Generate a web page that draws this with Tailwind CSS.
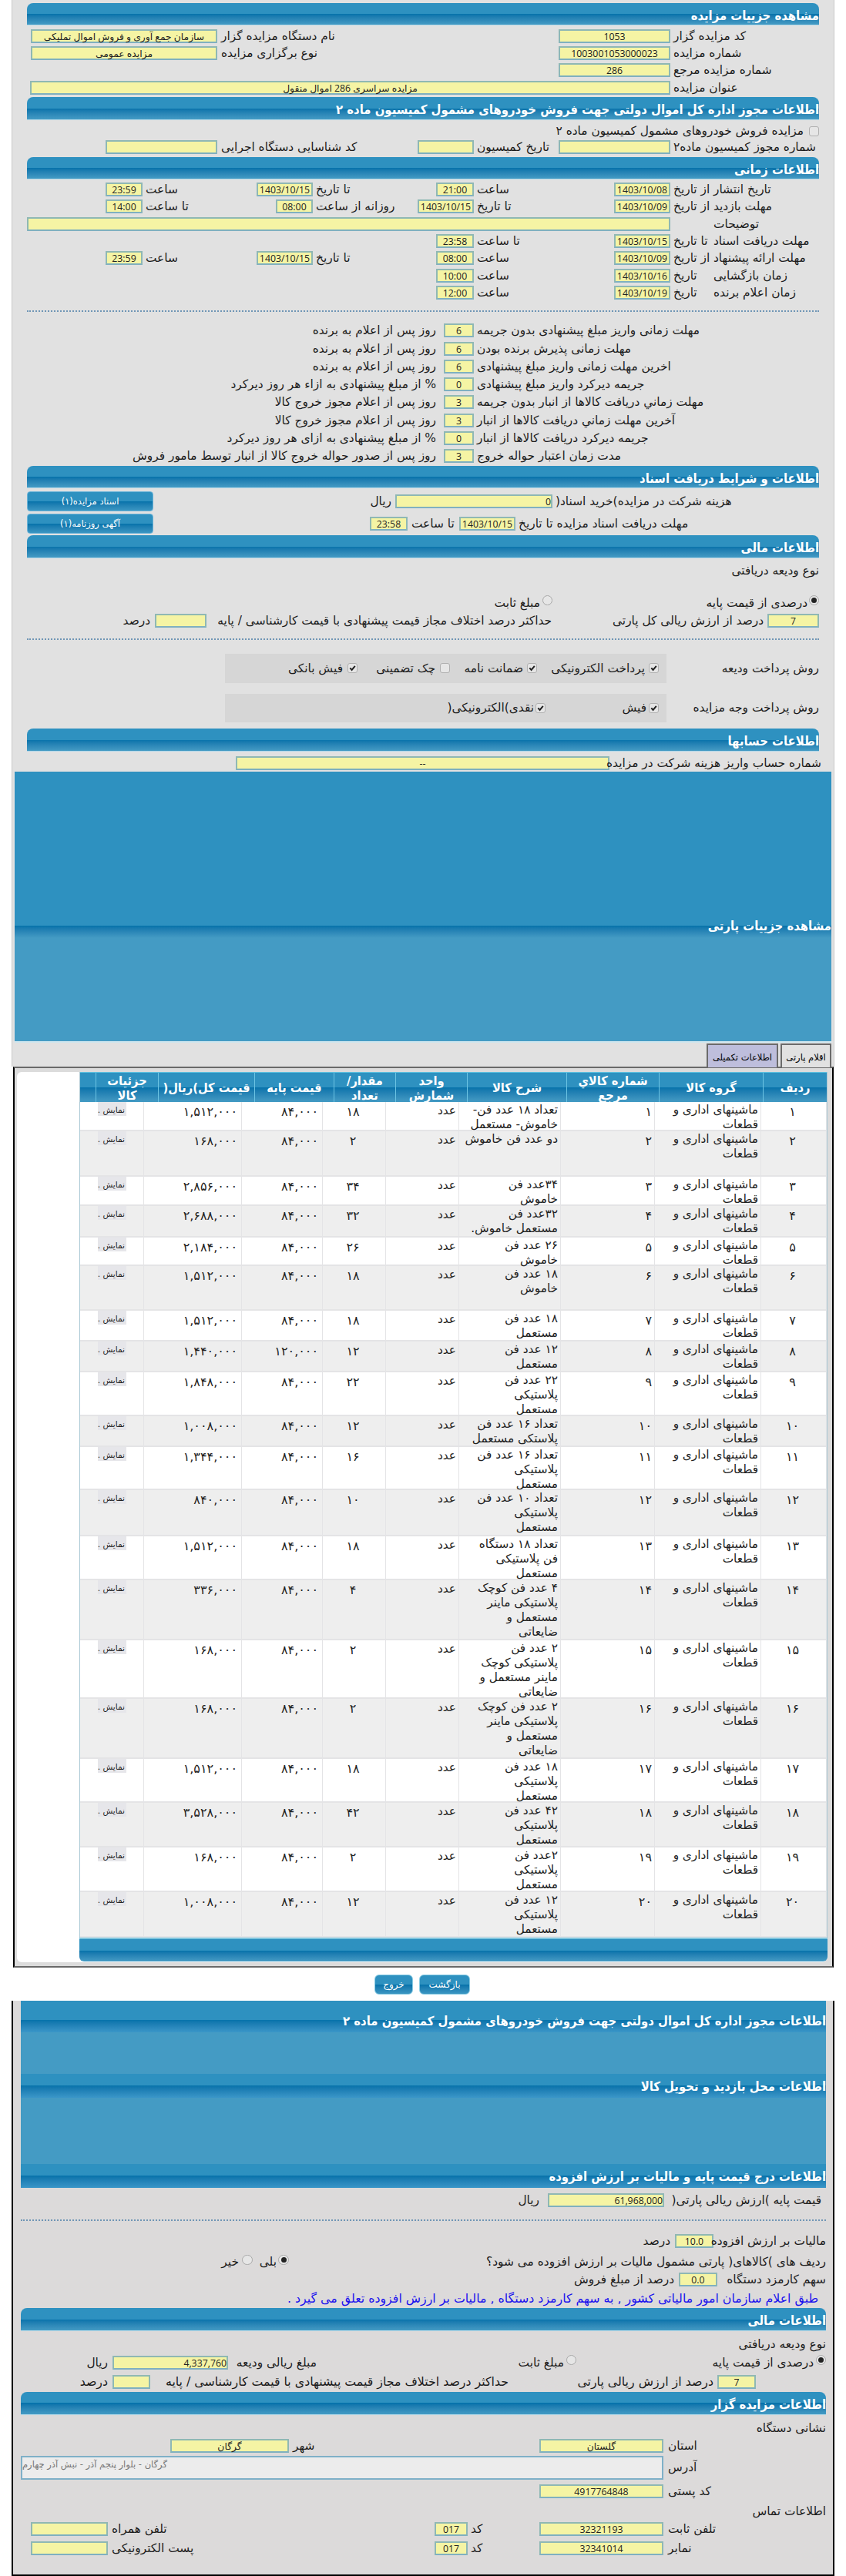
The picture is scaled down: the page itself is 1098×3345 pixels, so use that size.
<!DOCTYPE html>
<html lang="fa">
<head>
  <meta charset="UTF-8">
  <meta name="viewport" content="width=device-width, initial-scale=1.0">
  <title>مشاهده جزییات مزایده</title>
  <script src="https://cdn.jsdelivr.net/npm/@tailwindcss/browser@4"></script>
</head>
<body class="w-[1098px] bg-white text-[#1c1c1c] overflow-x-hidden font-['DejaVu_Sans',sans-serif]">

  <!-- Auction form -->
  <section id="auction" class="mx-[15px] w-[1068px] h-[1002px] bg-[#e1e1e1] border-x border-[#c9c9c9]"></section>

  <!-- Lot heading block -->
  <section class="mx-[15px] w-[1068px] h-[383px] bg-[#e1e1e1] border-x border-[#c9c9c9] px-[3px]">
    <div class="h-[352px] bg-[#449bc4] border-b-2 border-[#cfe6ee] flex flex-col">
      <div class="h-[200px] bg-[#2e91c0]"></div>
      <div dir="rtl" class="h-[16px] bg-linear-to-b from-[#0472aa] to-[#449bc4] relative">
        <span class="absolute right-0 -top-[13px] leading-[28px] text-[16.5px] font-bold font-['DejaVu_Sans_Condensed','DejaVu_Sans',sans-serif] text-white whitespace-nowrap">مشاهده جزییات پارتی</span>
      </div>
    </div>
    <!-- Tabs -->
    <div dir="rtl" class="flex items-end gap-[3px] pt-px text-[11.5px] text-black whitespace-nowrap">
      <div class="w-[66px] h-[31px] leading-[32px] text-center border-2 border-b-0 border-[#6b6b6b] bg-[#e1e1e1]">اقلام پارتی</div>
      <div class="w-[93px] h-[31px] leading-[32px] text-center border-2 border-b-0 border-[#6b6b6b] bg-[#bebedc]">اطلاعات تکمیلی</div>
    </div>
  </section>

  <!-- Lot items -->
  <section class="mx-[17px] w-[1065px] h-[1170px] border-2 border-black border-y-[#6a6a6a] bg-[#dcdcdc] pl-[3px] pr-[7px] py-[5px]">
    <div class="h-[1156px] bg-white rounded-md pl-[81px]">
      <div class="w-[971px] border-x border-[#aac8d4]">
        <div id="itemsHead" class="flex h-[39px] border-t border-[#5cc0e0] bg-linear-to-b from-[#2e91c0] from-50% via-[#0472aa] via-50% to-[#449bc4] text-white font-bold text-[16.3px] leading-[19px] font-['DejaVu_Sans_Condensed','DejaVu_Sans',sans-serif]"></div>
        <div id="items"></div>
      </div>
      <div class="w-[971px] h-[31px] rounded-b-md border-t-2 border-[#7cc4de] bg-linear-to-b from-[#2e91c0] from-52% via-[#0472aa] via-52% to-[#449bc4]"></div>
    </div>
  </section>

  <!-- Actions -->
  <div dir="rtl" class="flex h-[43px] items-center pr-[488px] gap-[8px] text-white text-[12px]">
    <button class="w-[66px] h-[26px] rounded-md border border-[#8acce4] bg-linear-to-b from-[#2e91c0] from-50% via-[#0472aa] via-50% to-[#3a96c2]">بازگشت</button>
    <button class="w-[50px] h-[26px] rounded-md border border-[#8acce4] bg-linear-to-b from-[#2e91c0] from-50% via-[#0472aa] via-50% to-[#3a96c2]">خروج</button>
  </div>

  <!-- Lot details -->
  <section class="mx-[15px] w-[1068px] h-[747px] bg-[#dcdada] border-2 border-t-0 border-black">
    <div class="ml-[10px] w-[1045px] h-[243px] bg-[#449bc4] text-white text-[16.5px] font-bold whitespace-nowrap font-['DejaVu_Sans_Condensed','DejaVu_Sans',sans-serif]">
      <div class="h-[10px] bg-[#2e91c0]"></div>
      <div dir="rtl" class="h-[31px] leading-[33px] bg-linear-to-b from-[#2e91c0] from-48% via-[#0472aa] via-48% to-[#3a96c8]">اطلاعات مجوز اداره کل اموال دولتی جهت فروش خودروهای مشمول کمیسیون ماده ۲</div>
      <div class="h-[54px]"></div>
      <div dir="rtl" class="h-[31px] leading-[33px] bg-linear-to-b from-[#2e91c0] from-48% via-[#0472aa] via-48% to-[#3a96c8]">اطلاعات محل بازدید و تحویل کالا</div>
      <div class="h-[86px]"></div>
      <div dir="rtl" class="h-[31px] leading-[33px] bg-linear-to-b from-[#2e91c0] from-48% via-[#0472aa] via-48% to-[#3a96c8]">اطلاعات درج قیمت پایه و مالیات بر ارزش افزوده</div>
    </div>
    <div id="lot"></div>
  </section>

<script>
  // class names of the row parts
  const kinds = {
    f: "shrink-0 h-[18px] leading-[15px] border-2 border-[#8fb8b4] border-b-[#7fb0c0] bg-[#f5f4a4] text-center text-[12.3px] text-[#222] whitespace-nowrap font-['Open_Sans','DejaVu_Sans',sans-serif]",
    n: "shrink-0 h-[18px] leading-[15px] border-2 border-[#8fb8b4] border-b-[#7fb0c0] bg-[#f5f4a4] text-right text-[12.3px] text-[#222] whitespace-nowrap font-['Open_Sans','DejaVu_Sans',sans-serif]",
    l: "shrink-0 text-left whitespace-nowrap leading-[18px]",
    r: "shrink-0 text-right whitespace-nowrap leading-[18px]",
    b: "shrink-0 h-[26px] leading-[25px] text-center text-[11.5px] text-white rounded-sm border border-[#6cb4d8] bg-linear-to-b from-[#2e91c0] from-50% via-[#0472aa] via-50% to-[#3a96c2]",
    c: "shrink-0 h-[13px] border border-[#b0b0b0] rounded-[3px] bg-[#e6e6e6]",
    k: "shrink-0 h-[13px] border border-[#b0b0b0] rounded-[3px] bg-[#e6e6e6]",
    o: "shrink-0 h-[13px] -mt-[6px] border border-[#a8a8a8] rounded-full bg-[#e6e6e6]",
    p: "shrink-0 h-[13px] -mt-[6px] border border-[#a8a8a8] rounded-full bg-[#e6e6e6] flex items-center justify-center",
    a: "shrink-0 h-[31px] border-2 border-[#7fb0c8] bg-[#ececec] text-left text-[11.5px] text-[#777] leading-[19px]"
  };
  const tick = '<svg viewBox="0 0 11 11" class="w-[11px] h-[11px]"><path d="M2.3 5.4 4.6 8 8.8 2.8" fill="none" stroke="#222" stroke-width="2"/></svg>';
  const dot = '<i class="w-[7px] h-[7px] rounded-full bg-[#222]"></i>';

  // x0, y0: where the panel's content box starts; h row = section title, d row = dotted rule
  function fill(id, x0, y0, left, right, rows) {
    let y = y0, html = "";
    for (const [top, bottom, type, data] of rows) {
      const mt = top - y;
      y = bottom;
      const box = `margin-top:${mt}px;height:${bottom - top}px`;
      const wide = `${box};margin-left:${left - x0}px;width:${right - left}px`;
      if (type === "h") {
        html += `<div dir="rtl" class="rounded-t-lg border-b border-[#b4d8e8] bg-linear-to-b from-[#2e91c0] from-50% via-[#0472aa] via-50% to-[#449bc4] text-white font-bold text-[16.5px] leading-[33px] whitespace-nowrap font-['DejaVu_Sans_Condensed','DejaVu_Sans',sans-serif]" style="${wide}">${data}</div>`;
      } else if (type === "d") {
        html += `<div class="border-t-2 border-dotted border-[#6f95b5]" style="${wide}"></div>`;
      } else {
        let x = x0, cells = "";
        data.forEach((it, i) => {
          const k = it[0];
          let a, b, text = it[it.length - 1];
          if (k === "l") { a = it[1]; b = data[i + 1] ? data[i + 1][1] : right + 6; }
          else if (k === "r") { a = x; b = it[1]; }
          else { a = it[1]; b = it[2]; if (it.length < 4) text = ""; }
          if (k === "k") text = tick;
          if (k === "p") text = dot;
          cells += `<div dir="rtl" class="${kinds[k]}" style="margin-left:${a - x}px;width:${b - a}px">${text}</div>`;
          x = b;
        });
        html += `<div class="flex items-center ${type}" style="${box}">${cells}</div>`;
      }
    }
    document.getElementById(id).innerHTML = `<div class="flow-root">${html}</div>`;
  }

  const T = "text-[15.4px]";
  const after = ["روز پس از اعلام به برنده", "روز پس از اعلام به برنده", "روز پس از اعلام به برنده", "% از مبلغ پیشنهادی به ازاء هر روز دیرکرد", "روز پس از اعلام مجوز خروج کالا", "روز پس از اعلام مجوز خروج کالا", "% از مبلغ پیشنهادی به ازای هر روز دیرکرد", "روز پس از صدور حواله خروج کالا از انبار توسط مامور فروش"];
  const before = ["مهلت زمانی واریز مبلغ پیشنهادی بدون جریمه", "مهلت زمانی پذیرش برنده بودن", "اخرین مهلت زمانی واریز مبلغ پیشنهادی", "جریمه دیرکرد واریز مبلغ پیشنهادی", "مهلت زماني دریافت کالاها از انبار بدون جریمه", "آخرین مهلت زماني دریافت کالاها از انبار", "جریمه دیرکرد دریافت کالاها از انبار", "مدت زمان اعتبار حواله خروج"];
  const days = [6, 6, 6, 0, 3, 3, 0, 3];

  fill("auction", 16, 0, 35, 1063, [
    [4, 33, "h", "مشاهده جزییات مزایده"],
    [35.5, 57.8, T, [["f", 40, 282, "سازمان جمع آوری و فروش اموال تملیکی"], ["l", 287, "نام دستگاه مزایده گزار"], ["f", 725, 870, "1053"], ["l", 874, "کد مزایده گزار"]]],
    [57.8, 80.1, T, [["f", 40, 282, "مزایده عمومی"], ["l", 287, "نوع برگزاری مزایده"], ["f", 725, 870, "1003001053000023"], ["l", 874, "شماره مزایده"]]],
    [80.1, 102.4, T, [["f", 725, 870, "286"], ["l", 874, "شماره مزایده مرجع"]]],
    [102.4, 124.7, T, [["f", 39, 870, "مزایده سراسری 286 اموال منقول"], ["l", 874, "عنوان مزایده"]]],
    [126, 156, "h", "اطلاعات مجوز اداره کل اموال دولتی جهت فروش خودروهای مشمول کمیسیون ماده ۲"],
    [160, 181, T, [["r", 1043, "مزایده فروش خودروهای مشمول کمیسیون ماده ۲"], ["c", 1050, 1063]]],
    [181, 202, T, [["f", 137, 282], ["l", 287, "کد شناسایی دستگاه اجرایی"], ["f", 542, 615], ["l", 619, "تاریخ کمیسیون"], ["f", 725, 870], ["l", 874, "شماره مجوز کمیسیون ماده۲"]]],
    [204, 233, "h", "اطلاعات زمانی"],
    [235, 257.3, T, [["f", 137, 185, "23:59"], ["l", 189, "ساعت"], ["f", 333, 406, "1403/10/15"], ["l", 410, "تا تاریخ"], ["f", 566, 615, "21:00"], ["l", 619, "ساعت"], ["f", 797, 870, "1403/10/08"], ["l", 874, "از تاریخ"], ["l", 926, "تاریخ انتشار"]]],
    [257.3, 279.6, T, [["f", 137, 185, "14:00"], ["l", 189, "تا ساعت"], ["f", 358, 406, "08:00"], ["l", 410, "روزانه از ساعت"], ["f", 542, 615, "1403/10/15"], ["l", 619, "تا تاریخ"], ["f", 797, 870, "1403/10/09"], ["l", 874, "از تاریخ"], ["l", 926, "مهلت بازدید"]]],
    [279.6, 301.9, T, [["f", 35, 870], ["l", 926, "توضیحات"]]],
    [301.9, 324.2, T, [["f", 566, 615, "23:58"], ["l", 619, "تا ساعت"], ["f", 797, 870, "1403/10/15"], ["l", 874, "تا تاریخ"], ["l", 926, "مهلت دریافت اسناد"]]],
    [324.2, 346.5, T, [["f", 137, 185, "23:59"], ["l", 189, "ساعت"], ["f", 333, 406, "1403/10/15"], ["l", 410, "تا تاریخ"], ["f", 566, 615, "08:00"], ["l", 619, "ساعت"], ["f", 797, 870, "1403/10/09"], ["l", 874, "از تاریخ"], ["l", 926, "مهلت ارائه پیشنهاد"]]],
    [346.5, 368.8, T, [["f", 566, 615, "10:00"], ["l", 619, "ساعت"], ["f", 797, 870, "1403/10/16"], ["l", 874, "تاریخ"], ["l", 926, "زمان بازگشایی"]]],
    [368.8, 391.1, T, [["f", 566, 615, "12:00"], ["l", 619, "ساعت"], ["f", 797, 870, "1403/10/19"], ["l", 874, "تاریخ"], ["l", 926, "زمان اعلام برنده"]]],
    [403, 405, "d"],
    ...days.map((n, i) => [417.7 + i * 23.3, 441 + i * 23.3, T, [["r", 566, after[i]], ["f", 576, 615, n], ["l", 619, before[i]]]]),
    [605, 634, "h", "اطلاعات و شرایط دریافت اسناد"],
    [637, 665, T, [["b", 35, 199, "اسناد مزایده(۱)"], ["r", 508, "ریال"], ["n", 513, 717, "0"], ["l", 721, "هزینه شرکت در مزایده)خرید اسناد("]]],
    [666, 694, T, [["b", 35, 199, "آگهی روزنامه(۱)"], ["f", 480, 529, "23:58"], ["l", 534, "تا ساعت"], ["f", 596, 669, "1403/10/15"], ["l", 673, "مهلت دریافت اسناد مزایده تا تاریخ"]]],
    [695, 725, "h", "اطلاعات مالی"],
    [730, 752, T, [["r", 1063, "نوع ودیعه دریافتی"]]],
    [772, 794, T, [["r", 701, "مبلغ ثابت"], ["o", 704, 717], ["r", 1048, "درصدی از قیمت پایه"], ["p", 1050, 1063]]],
    [795, 817, T, [["r", 195, "درصد"], ["f", 201, 268], ["r", 716, "حداکثر درصد اختلاف مجاز قیمت پیشنهادی با قیمت کارشناسی / پایه"], ["r", 991, "درصد از ارزش ریالی کل پارتی"], ["f", 996, 1063, "7"]]],
    [829, 831, "d"],
    [849, 887, T + " bg-linear-[90deg,transparent_276px,#d6d6d6_276px,#d6d6d6_849px,transparent_849px]", [["r", 445, "فیش بانکی"], ["k", 451, 464], ["r", 565, "چک تضمینی"], ["c", 571, 584], ["r", 679, "ضمانت نامه"], ["k", 684, 697], ["r", 837, "پرداخت الکترونیکی"], ["k", 842, 855], ["r", 1063, "روش پرداخت ودیعه"]]],
    [901, 938, T + " bg-linear-[90deg,transparent_276px,#d6d6d6_276px,#d6d6d6_849px,transparent_849px]", [["r", 693, "نقدی)الکترونیکی("], ["k", 695, 708], ["r", 839, "فیش"], ["k", 842, 855], ["r", 1063, "روش پرداخت وجه مزایده"]]],
    [946, 976, "h", "اطلاعات حسابها"],
    [981, 1001, T, [["f", 306, 791, "--"], ["r", 1066, "شماره حساب واریز هزینه شرکت در مزایده"]]]
  ]);

  fill("lot", 17, 2841, 27, 1072, [
    [2846, 2868, T, [["r", 700, "ریال"], ["n", 711, 862, "61,968,000"], ["r", 1066, "قیمت پایه )ارزش ریالی پارتی("]]],
    [2882, 2884, "d"],
    [2899, 2920, T, [["r", 870, "درصد"], ["f", 876, 926, "10.0"], ["r", 1072, "مالیات بر ارزش افزوده"]]],
    [2926, 2948, T, [["r", 310, "خیر"], ["o", 314, 328], ["r", 359, "بلی"], ["p", 361, 375], ["r", 1072, "ردیف های )کالاهای( پارتی مشمول مالیات بر ارزش افزوده می شود؟"]]],
    [2949, 2970, T, [["r", 875, "درصد از مبلغ فروش"], ["f", 881, 931, "0.0"], ["r", 1072, "سهم کارمزد دستگاه"]]],
    [2974, 2996, "text-[15.8px] text-[#1a12ee]", [["r", 1062, "طبق اعلام سازمان امور مالیاتی کشور , به سهم کارمزد دستگاه , مالیات بر ارزش افزوده تعلق می گیرد ."]]],
    [2997, 3027, "h", "اطلاعات مالی"],
    [3033, 3055, T, [["r", 1072, "نوع ودیعه دریافتی"]]],
    [3056, 3079, T, [["r", 140, "ریال"], ["n", 146, 296, "4,337,760"], ["r", 411, "مبلغ ریالی ودیعه"], ["r", 732, "مبلغ ثابت"], ["o", 735, 748], ["r", 1056, "درصدی از قیمت پایه"], ["p", 1059, 1072]]],
    [3082, 3104, "text-[15.8px]", [["r", 140, "درصد"], ["f", 146, 195], ["r", 660, "حداکثر درصد اختلاف مجاز قیمت پیشنهادی با قیمت کارشناسی / پایه"], ["r", 926, "درصد از ارزش ریالی پارتی"], ["f", 931, 981, "7"]]],
    [3106, 3136, "h", "اطلاعات مزایده گزار"],
    [3142, 3163, T, [["r", 1072, "نشانی دستگاه"]]],
    [3164, 3187, T, [["f", 221, 375, "گرگان"], ["l", 380, "شهر"], ["f", 700, 861, "گلستان"], ["l", 867, "استان"]]],
    [3189, 3219, T, [["a", 27, 861, "گرگان - بلوار پنجم آذر - نبش آذر چهارم"], ["l", 867, "آدرس"]]],
    [3224, 3246, T, [["f", 700, 861, "4917764848"], ["l", 867, "کد پستی"]]],
    [3250, 3272, T, [["r", 1072, "اطلاعات تماس"]]],
    [3272, 3295, T, [["f", 40, 140], ["l", 145, "تلفن همراه"], ["f", 564, 607, "017"], ["l", 611, "کد"], ["f", 700, 861, "32321193"], ["l", 867, "تلفن ثابت"]]],
    [3297, 3320, T, [["f", 40, 140], ["l", 145, "پست الکترونیکی"], ["f", 564, 607, "017"], ["l", 611, "کد"], ["f", 700, 861, "32341014"], ["l", 867, "نمابر"]]]
  ]);

  // items table, columns from left to right
  const heads = [[21, ""], [81, "جزئیات<br>کالا"], [125, "قیمت کل)ریال("], [103, "قیمت پایه"], [80, "مقدار/<br>تعداد"], [93, "واحد<br>شمارش"], [129, "شرح کالا"], [120, "شماره کالاي<br>مرجع"], [135, "گروه کالا"], [82, "ردیف"]];
  document.getElementById("itemsHead").innerHTML = heads.map(([w, t]) =>
    `<div dir="rtl" class="shrink-0 flex items-center justify-center text-center whitespace-nowrap border-r border-[#6cc4e4] last:border-r-0 pt-px" style="width:${w}px">${t}</div>`).join("");

  const items = [
    [38, "تعداد ۱۸ عدد فن-<br>خاموش- مستعمل", 18, 84000],
    [59, "دو عدد فن خاموش", 2, 84000],
    [38, "۳۴عدد فن<br>خاموش", 34, 84000],
    [41, "۳۲عدد فن<br>مستعمل خاموش.", 32, 84000],
    [37, "۲۶ عدد فن<br>خاموش", 26, 84000],
    [58, "۱۸ عدد فن<br>خاموش", 18, 84000],
    [39.5, "۱۸ عدد فن<br>مستعمل", 18, 84000],
    [40, "۱۲ عدد فن<br>مستعمل", 12, 120000],
    [57.5, "۲۲ عدد فن<br>پلاستیکی<br>مستعمل", 22, 84000],
    [40, "تعداد ۱۶ عدد فن<br>پلاستکی مستعمل", 12, 84000],
    [56, "تعداد ۱۶ عدد فن<br>پلاستیکی<br>مستعمل", 16, 84000],
    [60, "تعداد ۱۰ عدد فن<br>پلاستیکی<br>مستعمل", 10, 84000],
    [57, "تعداد ۱۸ دستگاه<br>فن پلاستیکی<br>مستعمل", 18, 84000],
    [78, "۴ عدد فن کوچک<br>پلاستیکی ماینر<br>مستعمل و<br>ضایعاتی", 4, 84000],
    [76, "۲ عدد فن<br>پلاستیکی کوچک<br>ماینر مستعمل و<br>ضایعاتی", 2, 84000],
    [78, "۲ عدد فن کوچک<br>پلاستیکی ماینر<br>مستعمل و<br>ضایعاتی", 2, 84000],
    [57, "۱۸ عدد فن<br>پلاستیکی<br>مستعمل", 18, 84000],
    [58, "۴۲ عدد فن<br>پلاستیکی<br>مستعمل", 42, 84000],
    [58, "۲عدد فن<br>پلاستیکی<br>مستعمل", 2, 84000],
    [59, "۱۲ عدد فن<br>پلاستیکی<br>مستعمل", 12, 84000]
  ];
  const fa = n => n.toLocaleString("en-US").replace(/\d/g, d => "۰۱۲۳۴۵۶۷۸۹"[d]);
  document.getElementById("items").innerHTML = items.map(([h, desc, count, price], i) => `
    <div class="grid grid-cols-[83px_127px_105px_82px_95px_132px_122px_138px_85px] border-b-2 border-[#e4e4e6] bg-white even:bg-[#eeeeee] text-[15.3px] leading-[19px] text-[#222] *:h-full *:min-h-0 *:border-r *:border-[#e4e4e6] *:pt-px *:pr-[3px] *:text-right *:whitespace-nowrap" dir="ltr" style="height:${h}px;grid-template-rows:${h - 2}px">
      <div class="pl-[23px] !pt-0"><div dir="rtl" class="w-[37px] h-[18px] pr-[2px] bg-[#e6e6ea] text-[10.5px] leading-[21px]">نمایش .</div></div>
      <div class="!pr-[5px] !pt-[3px] text-[16px]">${fa(count * price)}</div>
      <div class="!pr-[5px] !pt-[3px] text-[16px]">${fa(price)}</div>
      <div class="!text-center !pt-[3px] text-[16px]">${fa(count)}</div>
      <div dir="rtl" class="!pt-[2px]">عدد</div>
      <div dir="rtl">${desc}</div>
      <div class="!pt-[3px] text-[16px]">${fa(i + 1)}</div>
      <div dir="rtl">ماشینهای اداری و<br>قطعات</div>
      <div class="!text-center !pt-[3px] text-[16px]">${fa(i + 1)}</div>
    </div>`).join("");
</script>
</body>
</html>
